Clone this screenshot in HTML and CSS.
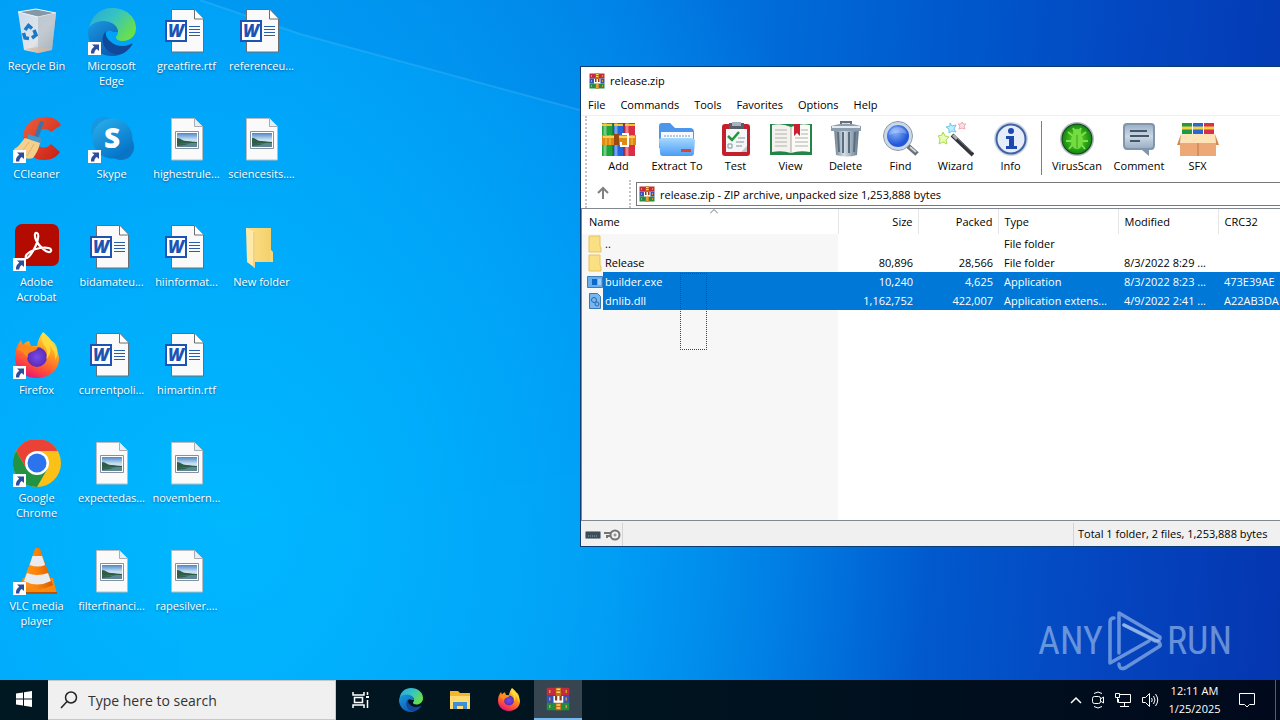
FILE: index.html
```html
<!DOCTYPE html>
<html lang="en">
<head>
<meta charset="utf-8">
<title>Desktop</title>
<link rel="stylesheet" href="styles.css">
</head>
<body>
<svg class="defs" aria-hidden="true">
  <defs>
    <linearGradient id="gEdgeA" x1="0" y1="0" x2="1" y2="0.6"><stop offset="0" stop-color="#2aa7d8"/><stop offset="0.5" stop-color="#35c3c3"/><stop offset="1" stop-color="#69e04a"/></linearGradient>
    <linearGradient id="gEdgeB" x1="0" y1="0" x2="0.6" y2="1"><stop offset="0" stop-color="#1b9ae0"/><stop offset="1" stop-color="#0c5db5"/></linearGradient>
    <linearGradient id="gFox" x1="0.8" y1="0" x2="0.3" y2="1"><stop offset="0" stop-color="#fff14a"/><stop offset="0.4" stop-color="#ff9a1f"/><stop offset="0.75" stop-color="#ff4a3c"/><stop offset="1" stop-color="#e4127f"/></linearGradient>
    <radialGradient id="gFoxIn"><stop offset="0" stop-color="#7a4be8"/><stop offset="1" stop-color="#5a2bb8"/></radialGradient>
    <linearGradient id="gSkype" x1="0" y1="0" x2="0.6" y2="1"><stop offset="0" stop-color="#2bb2ee"/><stop offset="1" stop-color="#0573c8"/></linearGradient>
    <linearGradient id="gSky" x1="0" y1="0" x2="0" y2="1"><stop offset="0" stop-color="#4e86c8"/><stop offset="0.5" stop-color="#cfe4f4"/><stop offset="1" stop-color="#7fb0d0"/></linearGradient>
    <linearGradient id="gCone" x1="0" y1="0" x2="1" y2="0"><stop offset="0" stop-color="#ff9a1a"/><stop offset="0.5" stop-color="#fb8208"/><stop offset="1" stop-color="#d95a00"/></linearGradient>
    <linearGradient id="gCc" x1="0" y1="0" x2="1" y2="1"><stop offset="0" stop-color="#f0603c"/><stop offset="1" stop-color="#c81e14"/></linearGradient>
    <linearGradient id="gBin" x1="0" y1="0" x2="1" y2="1"><stop offset="0" stop-color="#c8dcec"/><stop offset="0.6" stop-color="#e2e4e8"/><stop offset="1" stop-color="#9aa4ae"/></linearGradient>
    <linearGradient id="gMetal" x1="0" y1="0" x2="1" y2="0"><stop offset="0" stop-color="#6d7f90"/><stop offset="0.4" stop-color="#d3dde6"/><stop offset="1" stop-color="#63778a"/></linearGradient>
    <linearGradient id="gFoldBlue" x1="0" y1="0" x2="0" y2="1"><stop offset="0" stop-color="#a5d8ff"/><stop offset="1" stop-color="#4b9cf5"/></linearGradient>
    <radialGradient id="gLens" cx="0.4" cy="0.35"><stop offset="0" stop-color="#86b2fa"/><stop offset="1" stop-color="#2258d8"/></radialGradient>
    <radialGradient id="gGreen"><stop offset="0" stop-color="#6ee030"/><stop offset="1" stop-color="#128a10"/></radialGradient>
    <linearGradient id="gBub" x1="0" y1="0" x2="0" y2="1"><stop offset="0" stop-color="#9db2c8"/><stop offset="0.5" stop-color="#ccd8e4"/><stop offset="1" stop-color="#9bafc4"/></linearGradient>
    <linearGradient id="gFold" x1="0" y1="0" x2="1" y2="0"><stop offset="0" stop-color="#fbe08a"/><stop offset="1" stop-color="#f3cf68"/></linearGradient>
  </defs>

  <symbol id="shortcut" viewBox="0 0 13 13"><path d="M0 0h13v13H0z" fill="#fff"/><path d="M4 2.500h7v6.500L8.800 7C7.200 8 6.300 9.500 6.300 11.500H3C2.600 8.500 4 6.300 6.300 4.700z" fill="#2c4e9c"/></symbol>

  <symbol id="word" viewBox="0 0 48 48">
    <path d="M8.500 1.500h23l9 9.500v33h-32z" fill="#fafafa" stroke="#6b6d70"/><path d="M31.500 1.500v9.500h9" fill="#fff" stroke="#6b6d70"/>
    <path d="M26 18.500h11M26 21.500h11M26 24.500h11M26 27.500h11" stroke="#2b5ea8"/>
    <path d="M2 12h22v22H2z" fill="#1d54b4"/><path d="M4 14h18v18H4z" fill="#fff"/>
  </symbol>

  <symbol id="picture" viewBox="0 0 48 48">
    <path d="M8.500 2.500h23l8 8v33.500h-31z" fill="#fafafa" stroke="#b9bcc0"/><path d="M31.500 2.500v8h8" fill="#e1f0f8" stroke="#a9acb0"/>
    <path d="M12.500 15.500h23v17h-23z" fill="#fff" stroke="#8591a0"/><path d="M14 17h20v14H14z" fill="url(#gSky)"/>
    <path d="M14 22c4 0 5 3 9 3s6 1 11 1v1H14z" fill="#2e5c44"/><path d="M14 27h20v4H14z" fill="#5c8794"/><path d="M14 27c6 0 10 1 14 0l-6 2-8 1z" fill="#35604f"/>
  </symbol>

  <symbol id="bin" viewBox="0 0 48 48">
    <path d="M5 4l18-3 20 4-4 37-14 3-14-3z" fill="url(#gBin)"/><path d="M5 4l18-3 20 4-18 4z" fill="#8498a8" stroke="#f2f6f8"/><path d="M25 9l18-4-4 37-14 3z" fill="#aeb8c2" opacity="0.600"/>
    <path d="M12 41l13-2 14 2-14 4z" fill="#d8b8a0" opacity="0.700"/>
    <g fill="none" stroke="#1779c8" stroke-width="3.500"><path d="M12 22l3.500-4.500 3.500 3"/><path d="M21 22l2 5-4 3"/><path d="M16 30.500l-4-.5-1.500-5"/></g>
  </symbol>

  <symbol id="edge" viewBox="0 0 48 48">
    <path d="M1 21C3 8 12 0 24 0c14 0 24 9 24 20 0 8-6 13-13 13-5 0-7-2-7-4 0-1 2-2 2-5 0-5-6-10-14-10C8 14 3 17 1 21z" fill="url(#gEdgeA)"/>
    <path d="M0 24c0-6 7-11 15-11 9 0 15 5 15 11h-5c-2-2-6-2-8 2-5 10 4 20 14 21-3 1-5 1-7 1C10 48 0 37 0 24z" fill="url(#gEdgeB)"/>
    <path d="M18 23c-8 9-1 22 12 24 6-1 11-5 14-10 1-1 0-2-1-1-6 3-15 3-20-2-4-3-6-7-5-11z" fill="#10489a"/>
  </symbol>

  <symbol id="ccleaner" viewBox="0 0 48 48">
    <path d="M48 9C44 3 38 0 31 1 17 2 9 12 10 24c1 13 10 20 21 20 7 0 13-3 16-8l-9-8c-3 4-9 5-13 1-4-5-3-12 2-15 4-2 8-1 11 2z" fill="url(#gCc)"/>
    <path d="M27 5l4 1-6 17-4-2z" fill="#3c74a8"/><path d="M15 18l13 4 1 6-15-4z" fill="#4796cc"/>
    <path d="M1 33c5-2 7-7 11-11l15 5c-1 6-4 11-7 15-5 2-14 0-19-9z" fill="#f5cf8c"/><path d="M8 37l8-11M14 40l7-12" stroke="#e0b470"/>
  </symbol>

  <symbol id="skype" viewBox="0 0 48 48">
    <circle cx="16" cy="14" r="13" fill="#1897e0"/><circle cx="33" cy="31" r="13" fill="#0d74c4"/><circle cx="24.500" cy="22.500" r="20" fill="url(#gSkype)"/>
  </symbol>

  <symbol id="acrobat" viewBox="0 0 48 48">
    <rect x="2" width="44" height="42" rx="7" fill="#b30b00"/>
    <path d="M13 34c-2-4 8-9 14-10 7-1 12 0 11 3-2 4-12-4-15-11-2-5-1-8 1-7 3 1 0 12-4 18-3 5-6 8-7 7z" fill="none" stroke="#fff" stroke-width="2.200"/>
  </symbol>

  <symbol id="firefox" viewBox="0 0 48 48">
    <path d="M30 0c6 5 9 8 11 14 2 2 4 6 5 11 1 12-9 21-22 21S2 37 2 25c0-7 2-12 6-17l2 5c2-3 4-4 6-4l2 5h6c1-6 3-10 6-14z" fill="url(#gFox)"/>
    <circle cx="24" cy="25" r="10" fill="url(#gFoxIn)"/>
    <path d="M4 17c4-3 8-4 12-3 3 1 6 1 9 1-1 3-4 4-7 5-3 1-4 3-3 6-4-4-6-7-11-9z" fill="#ff8a1c"/>
    <path d="M30 1c-3 8 0 10 3 15 2 4 1 8 0 11 4-3 6-10 3-14 4 3 7 10 6 15 6-9 0-19-4-19-3-2-6-5-8-8z" fill="#ffe03c" opacity="0.800"/>
  </symbol>

  <symbol id="chrome" viewBox="0 0 48 48">
    <circle cx="24" cy="23" r="24" fill="#fbc116"/>
    <path d="M3.200 11A24 24 0 0 1 44.800 11H24L13.600 29z" fill="#ea4335"/>
    <path d="M3.200 11A24 24 0 0 0 24 47L34.400 29l-20.800 0z" fill="#229342"/>
    <circle cx="24" cy="23" r="12" fill="#fff"/><circle cx="24" cy="23" r="9.500" fill="#2b74ee"/>
  </symbol>

  <symbol id="vlc" viewBox="0 0 48 48">
    <path d="M10 30h30l4 16H3z" fill="#f78a10"/><path d="M3 44h41v2H3z" fill="#b85205"/>
    <path d="M22 1q2-3 5 0l13 36q-15 8-31 0z" fill="url(#gCone)"/>
    <path d="M19.500 8h9.600l3 9q-7 3-15.500 0z" fill="#e9ebee"/><path d="M14 25q10 4 21 0l3 8q-14 7-27 0z" fill="#e9ebee"/>
  </symbol>

  <symbol id="folder" viewBox="0 0 48 48">
    <path d="M8 4h25v22l2 3v9H12z" fill="url(#gFold)"/><path d="M8 4l9 4v36l-8-6z" fill="#ffe9a8"/><path d="M16 8v36" stroke="#e3bd58"/><path d="M32 25l3 3v10h-3z" fill="#f6d679"/>
  </symbol>

  <symbol id="rar" viewBox="0 0 32 32">
    <path d="M1 1h30v10H1z" fill="#c22c3c"/><path d="M1 11h30v10H1z" fill="#3a51b8"/><path d="M1 21h30v10H1z" fill="#238c3e"/>
    <path d="M5 1v30M27 1v30" stroke="#d8963c" stroke-width="2" stroke-dasharray="4 6" stroke-dashoffset="-3"/>
    <path d="M13 1h7v30h-7z" fill="#c76b14"/><path d="M14 3h5M14 7h5M14 24h5M14 28h5" stroke="#ffd968" stroke-width="2"/>
    <path d="M10 12h13v9H10z" fill="#fff"/><path d="M12 12h3v6h-3zM18 12h3v6h-3z" fill="#8a3d18"/>
  </symbol>

  <symbol id="books" viewBox="0 0 36 36">
    <path d="M1 2h11v33H1z" fill="#1fa43a"/><path d="M12 2h11v33H12z" fill="#2466dc"/><path d="M23 2h11v33H23z" fill="#dc2d44"/>
    <path d="M4 2v33M15 2v33M26 2v33" stroke="#fff" stroke-opacity="0.400" stroke-width="3"/><path d="M12 2v33M23 2v33" stroke="#0a2a50" stroke-opacity="0.500"/>
    <path d="M1 4h10M13 4h9M24 4h10" stroke="#f7c531" stroke-width="2"/>
    <path d="M1 14h34v10H1z" fill="#e08a16"/><path d="M2 16h32" stroke="#ffd45c" stroke-width="2"/>
    <path d="M13 13h5v11h-5z" fill="#9a4a10"/><path d="M21 13h6v12h-7v-4" fill="none" stroke="#fff" stroke-width="2"/><path d="M5 14v10M9 14v10M31 14v10" stroke="#ffc23c"/>
  </symbol>
  <symbol id="extract" viewBox="0 0 36 36">
    <path d="M0 5q0-3 3-3h8l5 5h15q4 0 4 4v16H0z" fill="#4c97ec"/><path d="M2 11h32v12H2z" fill="#f5f9fd"/><path d="M5 15h26" stroke="#7e98b5" stroke-dasharray="2 1"/>
    <path d="M0 19q0-2 3-2h28q4 0 5 2l-1 13q0 3-3 3H4q-3 0-3-3z" fill="url(#gFoldBlue)"/><path d="M22 28h10v3H22z" fill="#dc4430"/>
  </symbol>
  <symbol id="test" viewBox="0 0 36 36">
    <rect x="4" y="3" width="28" height="32" rx="3" fill="#c4202c"/><path d="M8 8h21v23H8z" fill="#f5f6f8"/><path d="M23 31l6-6v6z" fill="#c3c8cc"/>
    <path d="M11 2h15v6H11z" fill="#56606a"/><path d="M14 1h9v4h-9z" fill="#aab3bb"/>
    <path d="M10 15l4 4 7-8" fill="none" stroke="#1e963a" stroke-width="2.500"/><path d="M20 17h7M18 21h8M18 25h6M10 23h4v4h-4z" fill="none" stroke="#8a929a"/>
  </symbol>
  <symbol id="view" viewBox="0 0 42 36">
    <path d="M0 3h42v31H0z" fill="#228446"/><path d="M2 4q10-2 19 2v26q-9-3-19-1z" fill="#f4f2ee"/><path d="M40 4q-10-2-19 2v26q9-3 19-1z" fill="#fbfaf6"/><path d="M21 6v26" stroke="#a8a49c"/>
    <path d="M5 9h12M5 13h12M5 17h12M5 21h12M5 25h12M31 9h7M31 13h7M25 17h13M25 21h13M25 25h13" stroke="#b0b0ac"/><path d="M24 3h6v12l-3-3-3 3z" fill="#cc2030"/>
  </symbol>
  <symbol id="delete" viewBox="0 0 36 36">
    <path d="M6 8h25l-2 26q-10 3-21 0z" fill="url(#gMetal)"/><path d="M10 11l1 20M15 11v21M21 11v21M27 11l-1 20" stroke="#5b6e80" stroke-width="2"/>
    <path d="M3 5q15-5 30 0v5H3z" fill="#8c9eae"/><path d="M4 6h28" stroke="#e4eaf0" stroke-width="2"/><path d="M13 3V1h10v2" fill="none" stroke="#63727f" stroke-width="2"/>
  </symbol>
  <symbol id="find" viewBox="0 0 36 36">
    <path d="M25 25l9 8" stroke="#687078" stroke-width="5"/><path d="M27 26l6 5" stroke="#cdd3d8" stroke-width="2"/>
    <circle cx="15" cy="15" r="12.500" fill="url(#gLens)" stroke="#cdd8e6" stroke-width="3"/><circle cx="15" cy="15" r="14.500" fill="none" stroke="#8496ac"/><path d="M6 14q1-8 9-8 8 1 9 7-9-3-18 1z" fill="#fff" opacity="0.250"/>
  </symbol>
  <symbol id="wizard" viewBox="0 0 36 36">
    <path d="M14 14l21 20" stroke="#32363a" stroke-width="4"/><path d="M15 14l4 4" stroke="#a9afb5" stroke-width="3"/><path d="M20 18l14 13" stroke="#7b8187"/>
    <path d="M5 11l2 4 4 1-3 3 1 4-4-2-4 2 1-5-2-3 4-1z" fill="#e8fcb4" stroke="#aadc50"/><path d="M12 2l2 3 4-1-2 4 2 3-4-1-3 2v-4l-3-2 4-1z" fill="#c0eefc" stroke="#6cc8ee"/><path d="M24 1l1 2h3l-2 2 1 3-3-1-3 1 1-3-2-2h3z" fill="#ffe4e6" stroke="#f4a8b0"/>
  </symbol>
  <symbol id="info" viewBox="0 0 36 36">
    <circle cx="18" cy="18" r="17" fill="#ccd7e8"/><circle cx="18" cy="18" r="14.500" fill="#e5edf9" stroke="#4263a2" stroke-width="2"/>
    <circle cx="18" cy="10" r="3" fill="#1e48b0"/><path d="M13 15h8v10h3v3H13v-3h3v-7h-3z" fill="#1e48b0"/>
  </symbol>
  <symbol id="virus" viewBox="0 0 36 36">
    <circle cx="18" cy="18" r="17" fill="#b4bcc4"/><circle cx="18" cy="18" r="15.500" fill="#183e20"/><circle cx="18" cy="18" r="14.500" fill="url(#gGreen)"/>
    <g fill="none" stroke="#7fe04a" stroke-width="2"><path d="M9 11l5 4M27 11l-5 4M7 20h6M29 20h-6M10 28l4-5M26 28l-4-5M14 7l2 4M22 7l-2 4"/></g><ellipse cx="18" cy="20" rx="6" ry="8" fill="#74dc40"/><circle cx="18" cy="12" r="4" fill="#74dc40"/><path d="M18 14v13" stroke="#37a41d"/>
  </symbol>
  <symbol id="comment" viewBox="0 0 36 36">
    <path d="M6 2h24q4 0 4 4v18q0 5-4 5h-2v6l-7-6H6q-4 0-4-5V6q0-4 4-4z" fill="#8195ad"/><rect x="4" y="4" width="28" height="23" rx="3" fill="url(#gBub)"/><path d="M9 10h17M9 15h19M9 20h10" stroke="#44566a" stroke-width="2"/>
  </symbol>
  <symbol id="sfx" viewBox="0 0 42 36">
    <path d="M5 2h10v14H5z" fill="#229a45"/><path d="M16 2h10v14H16z" fill="#2c66d4"/><path d="M27 2h10v14H27z" fill="#d8304c"/><path d="M5 7h10M16 7h10M27 7h10" stroke="#f6d040" stroke-width="3"/>
    <path d="M4 13h34v10H4z" fill="#ffe2b5"/><path d="M3 22h36v13H3z" fill="#eda878"/><path d="M21 22v13" stroke="#bd7440"/><path d="M4 13L0 24h3zM38 13l4 11h-3z" fill="#d48a4c"/>
  </symbol>
</svg>

<main class="desktop">
  <svg class="rays" viewBox="0 0 1280 680" preserveAspectRatio="none" aria-hidden="true">
    <path d="M200 0L300 34 580 110 1280 330V0z" fill="#0050c8" opacity="0.100"/>
    <path d="M200 0L300 34 580 110" fill="none" stroke="#7ad0ff" stroke-width="2" opacity="0.200"/>
    <path d="M180 535L620 468V680H180z" fill="#12b4ff" opacity="0.080"/>
  </svg>
  <ul class="icons">
    <li class="item"><svg class="pic"><use href="#bin"/></svg><span>Recycle Bin</span></li>
    <li class="item"><svg class="pic"><use href="#ccleaner"/><use href="#shortcut" y="34" width="13" height="13"/></svg><span>CCleaner</span></li>
    <li class="item"><svg class="pic"><use href="#acrobat"/><use href="#shortcut" y="34" width="13" height="13"/></svg><span>Adobe Acrobat</span></li>
    <li class="item"><svg class="pic"><use href="#firefox"/><use href="#shortcut" y="34" width="13" height="13"/></svg><span>Firefox</span></li>
    <li class="item"><svg class="pic"><use href="#chrome"/><use href="#shortcut" y="34" width="13" height="13"/></svg><span>Google Chrome</span></li>
    <li class="item"><svg class="pic"><use href="#vlc"/><use href="#shortcut" y="34" width="13" height="13"/></svg><span>VLC media player</span></li>
    <li class="item"><svg class="pic"><use href="#edge"/><use href="#shortcut" y="34" width="13" height="13"/></svg><span>Microsoft Edge</span></li>
    <li class="item"><svg class="pic"><use href="#skype"/><text class="skype-s" x="24" y="32">S</text><use href="#shortcut" y="34" width="13" height="13"/></svg><span>Skype</span></li>
    <li class="item"><svg class="pic"><use href="#word"/><text class="word-w" x="13" y="29">W</text></svg><span>bidamateu...</span></li>
    <li class="item"><svg class="pic"><use href="#word"/><text class="word-w" x="13" y="29">W</text></svg><span>currentpoli...</span></li>
    <li class="item"><svg class="pic"><use href="#picture"/></svg><span>expectedas...</span></li>
    <li class="item"><svg class="pic"><use href="#picture"/></svg><span>filterfinanci...</span></li>
    <li class="item"><svg class="pic"><use href="#word"/><text class="word-w" x="13" y="29">W</text></svg><span>greatfire.rtf</span></li>
    <li class="item"><svg class="pic"><use href="#picture"/></svg><span>highestrule...</span></li>
    <li class="item"><svg class="pic"><use href="#word"/><text class="word-w" x="13" y="29">W</text></svg><span>hiinformat...</span></li>
    <li class="item"><svg class="pic"><use href="#word"/><text class="word-w" x="13" y="29">W</text></svg><span>himartin.rtf</span></li>
    <li class="item"><svg class="pic"><use href="#picture"/></svg><span>novembern...</span></li>
    <li class="item"><svg class="pic"><use href="#picture"/></svg><span>rapesilver....</span></li>
    <li class="item"><svg class="pic"><use href="#word"/><text class="word-w" x="13" y="29">W</text></svg><span>referenceu...</span></li>
    <li class="item"><svg class="pic"><use href="#picture"/></svg><span>sciencesits....</span></li>
    <li class="item"><svg class="pic"><use href="#folder"/></svg><span>New folder</span></li>
  </ul>

  <div class="watermark">
    <span>ANY</span>
    <svg width="56" height="62" viewBox="0 0 56 62" fill="none" stroke="currentColor" stroke-width="3.500" stroke-linejoin="round" stroke-linecap="round">
      <path d="M7 8Q3 8 3 12V53L42 31"/><path d="M12 43V3L53 27Q54 31 48 31L17 15"/><path d="M12 54Q12 60 18 58L53 36Q54 33 50 31L17 15"/>
    </svg>
    <span>RUN</span>
  </div>

  <section class="window" aria-label="release.zip">
    <header class="title"><svg width="16" height="16"><use href="#rar"/></svg><span>release.zip</span></header>
    <nav class="menu"><button>File</button><button>Commands</button><button>Tools</button><button>Favorites</button><button>Options</button><button>Help</button></nav>
    <div class="bars">
      <div class="tools">
        <button class="tool"><svg width="36" height="36"><use href="#books"/></svg>Add</button>
        <button class="tool wide"><svg width="36" height="36"><use href="#extract"/></svg>Extract To</button>
        <button class="tool"><svg width="36" height="36"><use href="#test"/></svg>Test</button>
        <button class="tool"><svg width="42" height="36"><use href="#view"/></svg>View</button>
        <button class="tool"><svg width="36" height="36"><use href="#delete"/></svg>Delete</button>
        <button class="tool"><svg width="36" height="36"><use href="#find"/></svg>Find</button>
        <button class="tool"><svg width="36" height="36"><use href="#wizard"/></svg>Wizard</button>
        <button class="tool"><svg width="36" height="36"><use href="#info"/></svg>Info</button>
        <span class="divider"></span>
        <button class="tool wide"><svg width="36" height="36"><use href="#virus"/></svg>VirusScan</button>
        <button class="tool wide"><svg width="36" height="36"><use href="#comment"/></svg>Comment</button>
        <button class="tool"><svg width="42" height="36"><use href="#sfx"/></svg>SFX</button>
      </div>
      <div class="address">
        <button class="up" aria-label="Up one level"><svg width="12" height="14" viewBox="0 0 12 14" fill="none" stroke="#808080" stroke-width="2"><path d="M6 13V2M1 7l5-5 5 5"/></svg></button>
        <label class="path"><svg width="16" height="16"><use href="#rar"/></svg><input type="text" aria-label="Archive path" value="release.zip - ZIP archive, unpacked size 1,253,888 bytes"></label>
      </div>
    </div>
    <div class="list">
      <table>
        <colgroup><col class="c-name"><col class="c-num"><col class="c-num"><col class="c-type"><col class="c-date"><col></colgroup>
        <thead><tr><th>Name<svg class="sort" width="8" height="5" viewBox="0 0 8 5" fill="none" stroke="#777"><path d="M0 4.500l4-4 4 4"/></svg></th><th class="num">Size</th><th class="num">Packed</th><th>Type</th><th>Modified</th><th>CRC32</th></tr></thead>
        <tbody>
          <tr><td class="name"><div><svg width="16" height="18" viewBox="0 0 16 18"><path d="M2 1h11v10l1 2v4H2z" fill="#fbdf83" stroke="#e6c15c"/></svg><span>..</span></div></td><td></td><td></td><td>File folder</td><td></td><td></td></tr>
          <tr><td class="name"><div><svg width="16" height="18" viewBox="0 0 16 18"><path d="M2 1h11v10l1 2v4H2z" fill="#fbdf83" stroke="#e6c15c"/></svg><span>Release</span></div></td><td class="num">80,896</td><td class="num">28,566</td><td>File folder</td><td>8/3/2022 8:29 ...</td><td></td></tr>
          <tr class="sel"><td class="name"><div><svg width="16" height="18" viewBox="0 0 16 18"><path d="M0.500 3.500h15v11H.500z" fill="#69aeea" stroke="#3a7cbc"/><path d="M5 6h5v6H5z" fill="#0869cc"/><path d="M11 7h3M11 9h3M11 11h3" stroke="#d4eaff"/></svg><span>builder.exe</span></div></td><td class="num">10,240</td><td class="num">4,625</td><td>Application</td><td>8/3/2022 8:23 ...</td><td>473E39AE</td></tr>
          <tr class="sel"><td class="name"><div><svg width="16" height="18" viewBox="0 0 16 18"><path d="M2.500 1.500h8l3 3v12h-11z" fill="#78b8f0" stroke="#3c78b4"/><circle cx="7" cy="8" r="2.500" fill="none" stroke="#2b68ac"/><circle cx="10" cy="12" r="2" fill="none" stroke="#2b68ac"/></svg><span>dnlib.dll</span></div></td><td class="num">1,162,752</td><td class="num">422,007</td><td>Application extens...</td><td>4/9/2022 2:41 ...</td><td>A22AB3DA</td></tr>
        </tbody>
      </table>
      <div class="marquee"></div>
    </div>
    <footer class="status">
      <div class="state"><svg width="16" height="8" viewBox="0 0 16 8"><rect x="0.500" y="0.500" width="15" height="7" rx="1" fill="#3c4c58" stroke="#8a98a2"/><path d="M3 5h9" stroke="#8fa8b8" stroke-dasharray="1 1"/></svg><svg width="18" height="12" viewBox="0 0 18 12" fill="none" stroke="#747474" stroke-width="2"><circle cx="12" cy="6" r="4.500"/><circle cx="12" cy="6" r="1" stroke-width="1"/><path d="M8 4H1M8 7H4v2"/></svg></div>
      <div class="total">Total 1 folder, 2 files, 1,253,888 bytes</div>
    </footer>
  </section>
</main>

<footer class="taskbar">
  <button class="start" aria-label="Start"><svg width="16" height="16" viewBox="0 0 16 16" fill="#fff"><path d="M0 2.500l7-1v6H0zM8 1.300L16 0v7.500H8zM0 8.500h7v6l-7-1zM8 8.500h8V16l-8-1.300z"/></svg></button>
  <label class="search"><svg width="18" height="18" viewBox="0 0 18 18" fill="none" stroke="#222" stroke-width="1.500"><circle cx="11" cy="6.500" r="5.500"/><path d="M7 10.500L1 17"/></svg><input type="text" placeholder="Type here to search" aria-label="Search"></label>
  <div class="apps">
    <button class="app view" aria-label="Task view"><svg width="18" height="18" viewBox="0 0 18 18" fill="none" stroke="#fff" stroke-width="1.500"><path d="M1 1v3h11V1M2.500 6.500h8v5h-8zM1 17v-3h11v3M15.500 1v3M15.500 9v8"/><path d="M14 6h3" stroke-width="2"/></svg></button>
    <button class="app" aria-label="Microsoft Edge"><svg width="24" height="24" viewBox="0 0 48 48"><use href="#edge" width="48" height="48"/></svg></button>
    <button class="app" aria-label="File Explorer"><svg width="22" height="20" viewBox="0 0 22 20"><path d="M1 1h8l2 2h10v16H1z" fill="#f2b72e"/><path d="M1 6h20v13H1z" fill="#ffdc72"/><path d="M4 19v-7h14v7h-4v-3H8v3z" fill="#3c90d8"/></svg></button>
    <button class="app" aria-label="Firefox"><svg width="24" height="24" viewBox="0 0 48 48"><use href="#firefox" width="48" height="48"/></svg></button>
    <button class="app active" aria-label="WinRAR"><svg width="24" height="24"><use href="#rar"/></svg></button>
  </div>
  <div class="tray">
    <svg width="12" height="8" viewBox="0 0 12 8" fill="none" stroke="#fff" stroke-width="1.500"><path d="M1 7l5-5 5 5"/></svg>
    <svg width="14" height="18" viewBox="0 0 14 18" fill="none" stroke="#fff"><rect x="1.500" y="5.500" width="8" height="7" rx="2"/><path d="M9.500 8l3-2v6l-3-2M3 2.500q4-3 8 0M3 15.500q4 3 8 0"/></svg>
    <svg width="18" height="16" viewBox="0 0 18 16" fill="none" stroke="#fff"><path d="M6 2.500h10.500v8H4.500V7M10.500 10.500v4M6 14.500h9M1.500 1.500h4v4h-4zM3.500 5.500v5"/></svg>
    <svg width="18" height="16" viewBox="0 0 18 16" fill="none" stroke="#fff"><path d="M1.500 5.500h3l4-4v13l-4-4h-3zM10.500 6q1.500 2 0 4M12.500 4q3 4 0 8M14.500 2q4.500 6 0 12"/></svg>
    <time class="clock" datetime="2025-01-25T00:11">12:11 AM<br>1/25/2025</time>
    <svg width="18" height="18" viewBox="0 0 18 18" fill="none" stroke="#fff"><path d="M1.500 2.500h15v11h-5L9 16l-2.500-2.500h-5z"/></svg>
  </div>
</footer>
</body>
</html>
```

FILE: styles.css
```css
* { box-sizing: border-box; }

body {
  margin: 0;
  height: 100vh;
  display: flex;
  flex-direction: column;
  overflow: hidden;
  font: 11px/15px "Open Sans", "Noto Sans", sans-serif;
  color: #000;
}

button, input {
  font: inherit;
  color: inherit;
  border: 0;
  padding: 0;
  background: none;
}

.defs { position: absolute; width: 0; height: 0; }

.desktop {
  position: relative;
  flex: 1;
  min-height: 0;
  overflow: hidden;
  background:
    radial-gradient(ellipse 55% 110% at 18% 78%, rgba(0, 184, 255, 1), rgba(0, 176, 255, 0.6) 55%, rgba(0, 150, 245, 0) 100%),
    linear-gradient(94deg, #009af4 0%, #0098f2 22%, #0084e8 46%, #0060d2 68%, #0446c0 86%, #0436b0 100%);
}

.rays { position: absolute; inset: 0; width: 100%; height: 100%; }

.icons {
  position: relative;
  list-style: none;
  margin: 0;
  padding: 0;
  display: grid;
  grid-auto-flow: column;
  grid-template-rows: repeat(6, 108px);
  grid-auto-columns: 75px;
  justify-content: start;
}

.item {
  display: flex;
  flex-direction: column;
  align-items: center;
  gap: 2px;
  padding: 8px 2px 0 0;
  color: #fff;
  text-align: center;
  text-shadow: 0 1px 2px rgba(0, 40, 90, 0.6);
}

.pic { width: 48px; height: 48px; flex: none; overflow: visible; text-shadow: none; }

.word-w {
  font-size: 17px;
  font-weight: 800;
  font-style: italic;
  text-anchor: middle;
  fill: #1d54b4;
}

.skype-s {
  font-size: 28px;
  font-weight: 800;
  text-anchor: middle;
  fill: #fff;
}

.watermark {
  position: absolute;
  right: 48px;
  bottom: 8px;
  display: flex;
  align-items: center;
  gap: 4px;
  color: rgba(170, 200, 240, 0.6);
  font: 38px/44px "Liberation Sans Narrow", "Roboto Condensed", Roboto, sans-serif;
}

.window {
  position: absolute;
  left: 580px;
  right: 0;
  top: 66px;
  bottom: 133px;
  display: flex;
  flex-direction: column;
  background: #fff;
  border: 1px solid #0c3c74;
  border-right: 0;
}

.title { display: flex; align-items: center; gap: 5px; height: 27px; padding-left: 8px; }

.menu {
  display: flex;
  gap: 15px;
  height: 22px;
  padding-left: 7px;
  border-bottom: 1px solid #f0f0f0;
}

.bars {
  margin-left: 4px;
  border-left: 2px dotted #c4c4c4;
}

.tools { display: flex; align-items: center; height: 64px; padding-left: 4px; }

.tool {
  display: flex;
  flex-direction: column;
  align-items: center;
  width: 55px;
  height: 54px;
  line-height: 18px;
  white-space: nowrap;
}

.wide { width: 62px; }

.divider { width: 1px; height: 54px; margin: 0 4px 0 3px; background: #808080; }

.address { display: flex; align-items: center; height: 28px; }

.up {
  width: 44px;
  height: 28px;
  border-right: 2px dotted #c4c4c4;
  padding-right: 10px;
}

.path {
  flex: 1;
  display: flex;
  align-items: center;
  gap: 5px;
  height: 24px;
  margin-left: 5px;
  padding-left: 2px;
  border: 1px solid #777;
  border-right: 0;
}

.path input { flex: 1; outline: 0; }

.list {
  position: relative;
  flex: 1;
  overflow: hidden;
  border: 1px solid #828790;
  border-right: 0;
  background: linear-gradient(90deg, #f7f7f7 256px, #fff 256px);
}

table { width: 100%; table-layout: fixed; border-collapse: collapse; }

.c-name { width: 256px; }
.c-num { width: 80px; }
.c-type { width: 120px; }
.c-date { width: 100px; }

th, td {
  padding: 0 5px 0 6px;
  text-align: left;
  font-weight: 400;
  white-space: nowrap;
  overflow: hidden;
}

th { position: relative; height: 25px; background: #fff; border-right: 1px solid #e5e5e5; }
th:first-child { padding-left: 7px; }
th:last-child { border-right: 0; }
td { height: 19px; }

.num { text-align: right; }

.sort { position: absolute; left: 50%; top: 0; }

.name { padding: 0 0 0 5px; }
.name div { display: flex; align-items: center; height: 19px; }
.name span { flex: 1; line-height: 19px; padding-left: 2px; }

.sel { color: #fff; }
.sel td:not(.name), .sel .name span { background: #0078d7; }

.marquee {
  position: absolute;
  left: 98px;
  top: 64px;
  width: 27px;
  height: 77px;
  border: 1px dotted #444;
}

.status { display: flex; justify-content: space-between; height: 25px; padding-top: 2px; background: #f0f0f0; }

.state { display: flex; align-items: center; gap: 2px; width: 42px; padding-left: 4px; border-right: 1px solid #d4d4d4; }

.total { width: 207px; padding-left: 4px; line-height: 22px; border-left: 1px solid #d4d4d4; white-space: nowrap; }

.taskbar {
  display: flex;
  height: 40px;
  background: linear-gradient(90deg, #001822, #001420 50%, #000a1c);
  color: #fff;
}

.start { width: 48px; }

.search {
  display: flex;
  align-items: center;
  gap: 10px;
  width: 288px;
  padding-left: 12px;
  background: #f0f0f0;
  border: 1px solid #c8c8c8;
  border-left: 0;
  color: #333;
  font-size: 14px;
}

.search input { flex: 1; min-width: 0; height: 24px; outline: 0; }
.search input::placeholder { color: #333; opacity: 1; }

.apps { display: flex; gap: 1px; }

.app { width: 48px; display: flex; align-items: center; justify-content: center; }
.view { width: 50px; }
.active { background: #36454f; border-bottom: 2px solid #76b9ed; }

.tray {
  display: flex;
  align-items: center;
  gap: 9px;
  margin-left: auto;
  margin-right: 4px;
  padding-right: 19px;
  border-right: 1px solid #56606c;
}

.clock { width: 53px; text-align: center; line-height: 18px; margin-right: 8px; }
```
